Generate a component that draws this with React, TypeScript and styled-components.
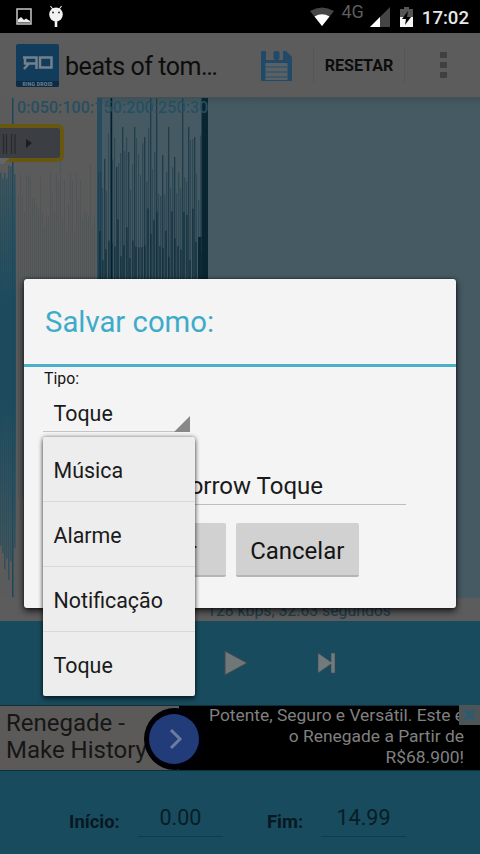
import React from "react";
import styled, { createGlobalStyle } from "styled-components";

const GlobalStyle = createGlobalStyle`
  * { box-sizing: border-box; }
  body { margin: 0; background: #000; font-family: Roboto, sans-serif; overflow: hidden; }
`;

const Screen = styled.div`
  position: relative;
  display: flex;
  flex-direction: column;
  width: 480px;
  height: 854px;
  overflow: hidden;
  background: #184b5e;
`;

const StatusBar = styled.header`
  display: flex;
  align-items: center;
  height: 33px;
  padding: 0 11px 0 16px;
  background: #000;
  color: #e8e8e8;
`;
const StatusGroup = styled.div<{ $end?: boolean }>`
  display: flex;
  align-items: center;
  gap: ${(p) => (p.$end ? 0 : 16)}px;
  margin-left: ${(p) => (p.$end ? "auto" : "0")};
`;
const Network = styled.span`
  margin: -9px 6px 0 7px;
  color: #5d5d5d;
  font-size: 18px;
  line-height: 20px;
`;
const Clock = styled.time`
  margin: 2px 0 0 9px;
  font-size: 18.6px;
  line-height: 24px;
  font-weight: 500;
`;

const ActionBar = styled.div`
  display: flex;
  align-items: center;
  height: 64px;
  flex: none;
  padding: 0 33px 0 16px;
  background: #5c5c5c;
`;
const Title = styled.h1`
  flex: none;
  width: 196px;
  margin: 3px 0 0 5px;
  font-size: 25px;
  line-height: 32px;
  font-weight: 400;
  letter-spacing: -0.45px;
  color: #0c0c0c;
  white-space: nowrap;
`;
const ResetButton = styled.button`
  flex: none;
  width: 92px;
  height: 36px;
  margin-left: 21px;
  padding: 1px 0 0;
  border: solid #555;
  border-width: 0 1px;
  background: none;
  font: 700 16.1px/20px Roboto, sans-serif;
  color: #0c0c0c;
`;
const Overflow = styled.div`
  display: grid;
  gap: 4px;
  margin-left: auto;
`;
const Dot = styled.i`
  width: 7px;
  height: 6px;
  background: #404040;
`;

const WaveArea = styled.section`
  position: relative;
  height: 501px;
  flex: none;
  background: #455a63;
`;
const WaveSvg = styled.svg`
  display: block;
`;
const Timeline = styled.div`
  position: absolute;
  left: 17px;
  top: 2px;
  width: 191px;
  overflow: hidden;
  font-size: 16px;
  line-height: 18px;
  font-weight: 500;
  letter-spacing: 0.1px;
  color: #264f61;
  white-space: nowrap;
`;
const Handle = styled.svg`
  position: absolute;
  left: 0;
  top: 24px;
`;

const InfoLine = styled.div`
  height: 23px;
  flex: none;
  padding: 3px 0 0 207px;
  background: #5c5c5c;
  color: #1c3e4d;
  font-size: 15.8px;
  line-height: 20px;
  white-space: nowrap;
`;
const Player = styled.div`
  display: flex;
  align-items: center;
  gap: 69px;
  height: 84px;
  flex: none;
  padding-left: 224px;
  background: #184b5e;
`;

const Ad = styled.section`
  position: relative;
  display: flex;
  height: 66px;
  flex: none;
  border: solid #102f3b;
  border-width: 1px 0;
  background: #000;
`;
const AdName = styled.div`
  width: 179px;
  flex: none;
  padding: 4px 0 0 6px;
  background: #5b5a58;
  color: #161616;
  font-size: 24px;
  line-height: 27px;
  white-space: nowrap;
`;
const AdCopy = styled.p`
  flex: 1;
  margin: -1px 16px 0 0;
  color: #808080;
  font-size: 17.4px;
  line-height: 21px;
  white-space: nowrap;
`;
const AdLine = styled.span`
  display: flex;
  justify-content: flex-end;
`;
const AdArrow = styled.svg`
  position: absolute;
  left: 144px;
  top: 2px;
`;
const AdClose = styled.svg`
  position: absolute;
  right: 0;
  top: -1px;
`;

const Range = styled.footer`
  display: flex;
  align-items: flex-start;
  flex: 1;
  padding: 33px 0 0 69px;
`;
const RangeLabel = styled.label<{ $width: number }>`
  width: ${(p) => p.$width}px;
  padding-top: 8px;
  color: #061820;
  font-size: 18.4px;
  line-height: 20px;
  font-weight: 700;
`;
const RangeValue = styled.output<{ $after?: number }>`
  width: 85px;
  height: 33px;
  margin-right: ${(p) => p.$after ?? 0}px;
  border-bottom: 1px solid #123b4b;
  color: #081d27;
  font-size: 21.5px;
  line-height: 27px;
  text-align: center;
`;

const Dialog = styled.section`
  position: absolute;
  left: 24px;
  top: 279px;
  width: 432px;
  height: 329px;
  border-radius: 3px;
  background: #f4f4f4;
  box-shadow: 0 3px 7px rgba(0, 0, 0, 0.75), 0 0 3px rgba(0, 0, 0, 0.5);
`;
const DialogTitle = styled.h2`
  height: 88px;
  margin: 0;
  padding: 25px 0 0 21px;
  border-bottom: 3px solid #4aafca;
  color: #3dabc9;
  font-size: 29.3px;
  line-height: 36px;
  font-weight: 400;
`;
const Form = styled.form`
  padding: 2px 50px 0 19px;
`;
const TypeLabel = styled.label`
  display: block;
  padding-left: 1px;
  font-size: 15.8px;
  line-height: 20px;
  color: #151515;
`;
const Spinner = styled.div`
  position: relative;
  width: 147px;
  height: 43px;
  padding: 12px 0 0 10.5px;
  border-bottom: 1px solid #c4c4c4;
  font-size: 21.4px;
  line-height: 26px;
  color: #1a1a1a;
`;
const SpinnerCorner = styled.svg`
  position: absolute;
  right: 0;
  bottom: -1px;
`;
const NameField = styled.div`
  display: flex;
  justify-content: flex-end;
  width: 363px;
  height: 73px;
  padding: 39px 83px 0 0;
  border: solid #bdbdbd;
  border-width: 0 0 1px;
  font-size: 24px;
  line-height: 30px;
  color: #1a1a1a;
  white-space: nowrap;
`;
const Actions = styled.div`
  display: flex;
  gap: 10px;
  padding: 18px 0 0 59px;
`;
const Button = styled.button`
  width: 123.5px;
  height: 54px;
  padding: 3px 0 0;
  border: 0;
  border-bottom: 2px solid #b5b5b5;
  border-radius: 2px;
  background: #d1d1d1;
  color: #141414;
  font: 400 24px/30px Roboto, sans-serif;
`;

const Menu = styled.ul`
  position: absolute;
  left: 43px;
  top: 437px;
  width: 152px;
  height: 259px;
  margin: 0;
  padding: 0;
  list-style: none;
  border-radius: 2px;
  background: #ededed;
  box-shadow: 0 3px 5px rgba(0, 0, 0, 0.5), 0 0 4px rgba(0, 0, 0, 0.45);
`;
const MenuItem = styled.li`
  height: 65px;
  padding: 21px 0 0 10.5px;
  border-bottom: 1px solid #d9d9d9;
  color: #1a1a1a;
  font-size: 21.4px;
  line-height: 26px;
  &:last-child { border-bottom: 0; }
`;

const noise = (n: number) => {
  const v = Math.sin(n * 91.73 + 4.1) * 43758.5453;
  return v - Math.floor(v);
};

const darkPeaks: Record<number, number> = {
  105: 62, 111: 1, 116: 70, 123: 30, 129: 55, 135: 30,
  145: 40, 151: 1, 157: 1, 163: 58, 169: 30, 174: 60, 183: 1, 188: 30, 195: 40,
};

function Waveform() {
  const left = [0, 2, 4, 6, 8, 10, 12, 14].map((x, i) => ({
    x, top: x === 12 ? 1 : 68 + noise(i) * 20, bottom: x === 12 ? 500 : 400 + noise(i + 9) * 90,
  }));
  const selected = Array.from({ length: 39 }, (_, i) => ({
    x: 18 + i * 2, y: i % 5 === 1 ? 60 + noise(i) * 25 : 75 + noise(i) * 60,
  }));
  const dark = Array.from({ length: 53 }, (_, i) => {
    const x = 98 + i * 2;
    const peak = darkPeaks[x] ?? darkPeaks[x + 1];
    return { x, y: peak ?? 30 + noise(i + 70) * 75, w: peak ? 1.3 : 0.9 + noise(i) * 0.5, peak: peak !== undefined };
  });
  const body = Array.from({ length: 35 }, (_, i) => ({
    x: 99 + i * 3, y: 105 + noise(i + 30) * 60,
  }));
  return (
    <WaveSvg width="480" height="501" viewBox="0 0 480 501">
      <defs>
        <linearGradient id="edge" x1="0" y1="0" x2="0" y2="1">
          <stop offset="0" stopColor="#3f5055" />
          <stop offset="1" stopColor="#455a63" />
        </linearGradient>
        <linearGradient id="played" x1="0" y1="0" x2="0" y2="1">
          <stop offset="0" stopColor="#194b5e" stopOpacity="0" />
          <stop offset="0.35" stopColor="#194b5e" stopOpacity="0.85" />
          <stop offset="0.6" stopColor="#194b5e" stopOpacity="0.85" />
          <stop offset="1" stopColor="#194b5e" stopOpacity="0" />
        </linearGradient>
      </defs>
      <rect width="97" height="501" fill="#5b5b5b" />
      <rect x="97" width="383" height="9" fill="url(#edge)" />
      <rect y="70" width="16" height="390" fill="url(#played)" />
      {left.map((b) => (
        <rect key={b.x} x={b.x} y={b.top} width="1.5" height={b.bottom - b.top} fill="#17495d" opacity={b.x === 12 ? 0.95 : 0.6} />
      ))}
      {selected.map((b) => (
        <rect key={b.x} x={b.x} y={b.y} width="0.9" height={500 - b.y * 2} fill="#3c4f55" opacity="0.45" />
      ))}
      <rect x="97" y="1" width="5" height="499" fill="#264b5c" />
      {dark.map((b) => (
        <rect key={b.x} x={b.x} y={b.y} width={b.w} height={500 - b.y * 2} fill="#173746" opacity={b.peak ? 0.85 : 0.5} />
      ))}
      {body.map((b) => (
        <rect key={b.x} x={b.x} y={b.y} width="1.8" height={500 - b.y * 2} fill="#0c2a38" opacity="0.6" />
      ))}
      <rect x="111" y="1" width="1.2" height="499" fill="#071f2b" />
      <rect x="201.500" y="1" width="6.500" height="499" fill="#0a2532" />
      <rect x="198" y="140" width="3.500" height="220" fill="#0b2836" />
    </WaveSvg>
  );
}

export default function App() {
  return (
    <>
      <GlobalStyle />
      <Screen>
        <StatusBar>
          <StatusGroup>
            <svg width="16" height="17" viewBox="0 0 16 17">
              <rect x="1" y="1" width="14" height="15" fill="#000" stroke="#c8c8c8" strokeWidth="1.5" />
              <path d="M2 14.500v-3l3-2.500 3 3 2-1.500 4 2.500v1.500z" fill="#eee" />
            </svg>
            <svg width="16" height="23" viewBox="0 0 16 23">
              <path d="M2.500 1l3 4M13.500 1l-3 4" stroke="#e0e0e0" strokeWidth="1.2" />
              <ellipse cx="8" cy="9.500" rx="6.800" ry="7" fill="#f2f2f2" />
              <path d="M8 16v6" stroke="#f2f2f2" strokeWidth="2.600" />
              <circle cx="5" cy="7.500" r="1" fill="#333" />
              <circle cx="11" cy="7.500" r="1" fill="#333" />
            </svg>
          </StatusGroup>
          <StatusGroup $end>
            <svg width="24" height="20" viewBox="0 0 24 20">
              <path d="M0 4Q12-3 24 4L12 19z" fill="#454545" />
              <path d="M4.500 9.500Q12 5 19.500 9.500L12 19z" fill="#fff" />
            </svg>
            <Network>4G</Network>
            <svg width="20" height="20" viewBox="0 0 20 20">
              <path d="M0 20L20 0v20z" fill="#454545" />
              <path d="M0 20L10 10v10z" fill="#fff" />
            </svg>
            <svg width="23" height="20" viewBox="0 0 23 20">
              <path d="M14 0h5v2h4v8H10V2h4z" fill="#555" />
              <path d="M10 10h13v10H10z" fill="#f5f5f5" />
              <path d="M18 4l-6 8h4l-1 6 6-8h-4z" fill="#000" />
            </svg>
            <Clock>17:02</Clock>
          </StatusGroup>
        </StatusBar>

        <ActionBar>
          <svg width="44" height="43" viewBox="0 0 44 43">
            <rect width="43" height="43" rx="2" fill="#123c5c" />
            <path d="M0 37h43v4a2 2 0 0 1-2 2H2a2 2 0 0 1-2-2z" fill="#0c2c46" />
            <path d="M7 13.500h13.500V25M20.500 19.500H9v-5M13 19.500l-5 5.500M24 13.500h11.500V23.500H24z" fill="none" stroke="#73818c" strokeWidth="2.500" />
            <text x="21.500" y="41.500" textAnchor="middle" fontFamily="Roboto" fontSize="5" fontWeight="700" fill="#748894" textLength="30">RING DROID</text>
          </svg>
          <Title>beats of tom…</Title>
          <svg width="31" height="31" viewBox="0 0 31 31">
            <path d="M0 1h5v9h17V1h3l6 6v24H0z" fill="#214a68" />
            <rect x="12.500" y="1" width="6" height="9" rx="2" fill="#214a68" />
            <path d="M4.500 13h22v17h-22z" fill="#5b6064" />
            <path d="M5 17h21M5 22h21M5 27h21" stroke="#345568" strokeWidth="1.600" />
          </svg>
          <ResetButton>RESETAR</ResetButton>
          <Overflow><Dot /><Dot /><Dot /></Overflow>
        </ActionBar>

        <WaveArea>
          <Waveform />
          <Timeline>0:050:100:150:200:250:30</Timeline>
          <Handle width="68" height="46" viewBox="0 0 68 46">
            <path d="M-4 5h61q5 0 5 5v24q0 5-5 5H-4" fill="#3b3d41" stroke="#675710" strokeWidth="4" />
            <path d="M-3 8H59V36H-3z" fill="#3b3e43" />
            <path d="M3.500 13v20M6.500 13v20M11.500 13v20M15 13v20" stroke="#292a2d" strokeWidth="1.2" />
            <path d="M26 18l6 4-6 5z" fill="#1d1e20" />
            <path d="M0 37h10l-7 6H0z" fill="#656565" />
          </Handle>
        </WaveArea>

        <InfoLine>128 kbps, 32.63 segundos</InfoLine>
        <Player>
          <svg width="24" height="26" viewBox="0 0 24 26"><path d="M1 1l22 12L1 25z" fill="#707779" stroke="#3d4c52" /></svg>
          <svg width="19" height="22" viewBox="0 0 19 22"><path d="M1 1l13 9V1h4v20h-4v-9L1 21z" fill="#737a7c" stroke="#3d4c52" strokeWidth=".6" /></svg>
        </Player>

        <Ad>
          <AdName>Renegade -<br />Make History</AdName>
          <AdCopy>
            <AdLine>Potente, Seguro e Versátil. Este é</AdLine>
            <AdLine>o Renegade a Partir de</AdLine>
            <AdLine>R$68.900!</AdLine>
          </AdCopy>
          <AdArrow width="60" height="62" viewBox="0 0 60 62">
            <circle cx="31" cy="31" r="31" fill="#000006" />
            <circle cx="30" cy="31" r="25" fill="#213c78" />
            <path d="M27 22l9 9-9 9" fill="none" stroke="#6c7ba0" strokeWidth="3" />
          </AdArrow>
          <AdClose width="21" height="20" viewBox="0 0 21 20">
            <rect width="21" height="20" fill="#4d5457" />
            <path d="M6 5l9 10M15 5L6 15" stroke="#285c70" strokeWidth="3" />
          </AdClose>
        </Ad>

        <Range>
          <RangeLabel $width={69}>Início:</RangeLabel>
          <RangeValue $after={44}>0.00</RangeValue>
          <RangeLabel $width={54}>Fim:</RangeLabel>
          <RangeValue>14.99</RangeValue>
        </Range>

        <Dialog>
          <DialogTitle>Salvar como:</DialogTitle>
          <Form>
            <TypeLabel>Tipo:</TypeLabel>
            <Spinner>
              Toque
              <SpinnerCorner width="16" height="16"><path d="M16 0v16H0z" fill="#888" /></SpinnerCorner>
            </Spinner>
            <NameField>beats of tomorrow Toque</NameField>
            <Actions>
              <Button type="button">Salvar</Button>
              <Button type="button">Cancelar</Button>
            </Actions>
          </Form>
        </Dialog>

        <Menu>
          {["Música", "Alarme", "Notificação", "Toque"].map((name) => (
            <MenuItem key={name}>{name}</MenuItem>
          ))}
        </Menu>
      </Screen>
    </>
  );
}
